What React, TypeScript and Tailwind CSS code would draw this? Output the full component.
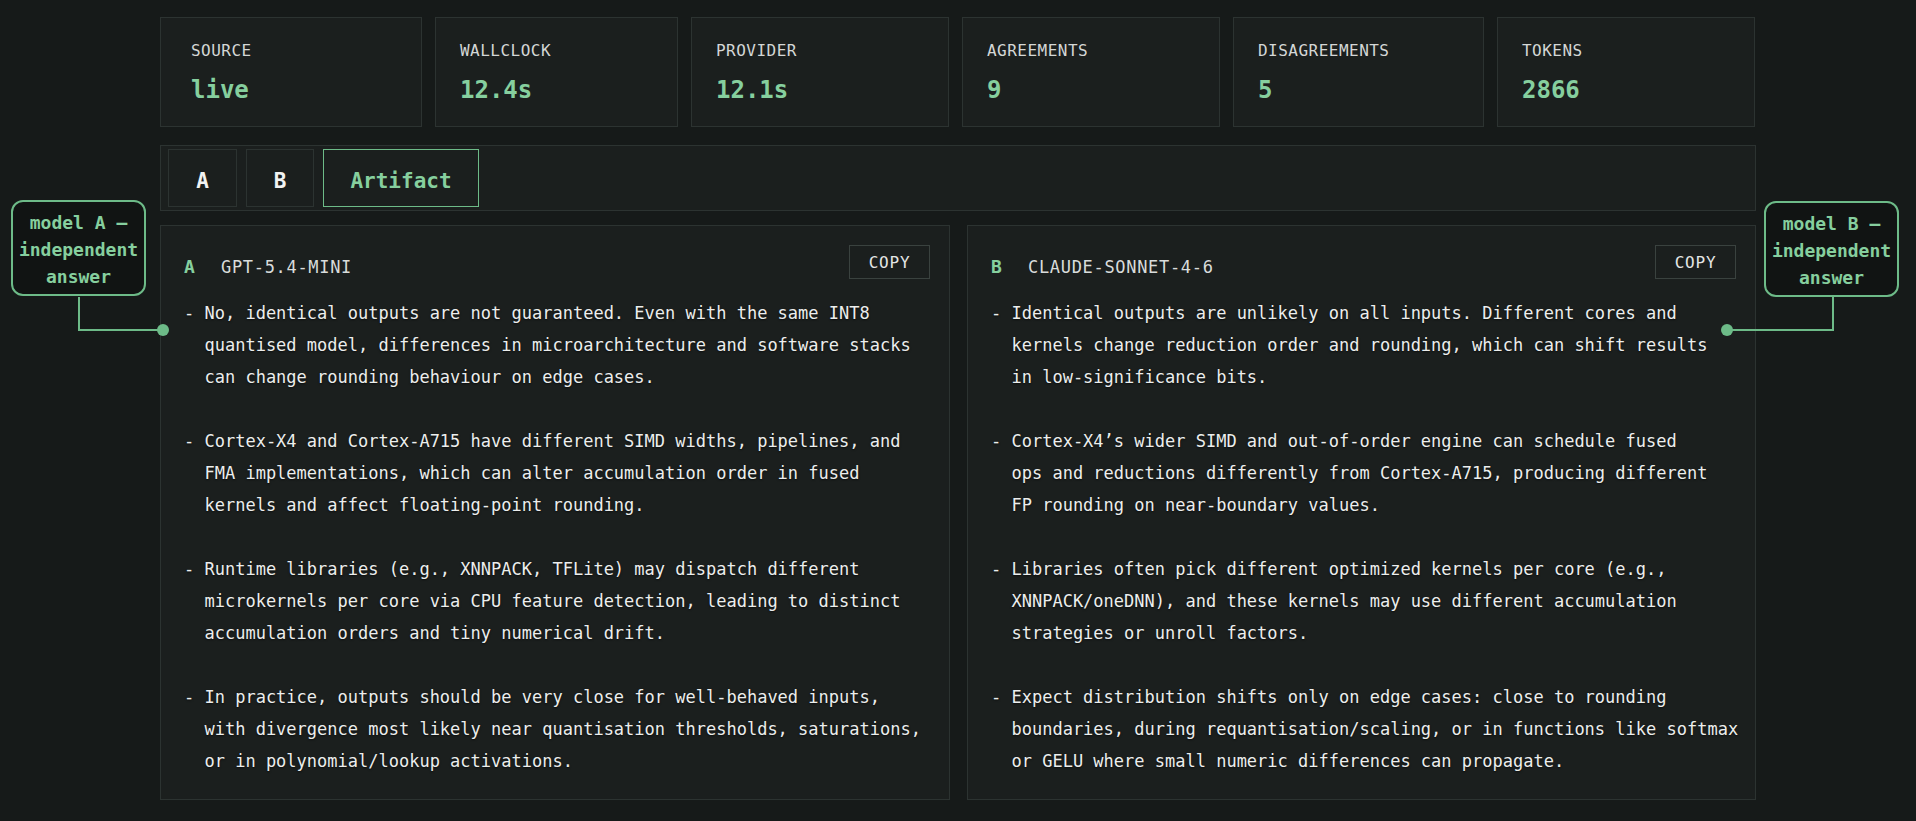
import React from "react";

const stats = [
  { label: "SOURCE", value: "live", cls: "w-[262px] pl-[30px]" },
  { label: "WALLCLOCK", value: "12.4s", cls: "w-[243px] pl-[24px]" },
  { label: "PROVIDER", value: "12.1s", cls: "w-[258px] pl-[24px]" },
  { label: "AGREEMENTS", value: "9", cls: "w-[258px] pl-[24px]" },
  { label: "DISAGREEMENTS", value: "5", cls: "w-[251px] pl-[24px]" },
  { label: "TOKENS", value: "2866", cls: "w-[258px] pl-[24px]" },
];

const leftLines = [
  "- No, identical outputs are not guaranteed. Even with the same INT8",
  "  quantised model, differences in microarchitecture and software stacks",
  "  can change rounding behaviour on edge cases.",
  "",
  "- Cortex-X4 and Cortex-A715 have different SIMD widths, pipelines, and",
  "  FMA implementations, which can alter accumulation order in fused",
  "  kernels and affect floating-point rounding.",
  "",
  "- Runtime libraries (e.g., XNNPACK, TFLite) may dispatch different",
  "  microkernels per core via CPU feature detection, leading to distinct",
  "  accumulation orders and tiny numerical drift.",
  "",
  "- In practice, outputs should be very close for well-behaved inputs,",
  "  with divergence most likely near quantisation thresholds, saturations,",
  "  or in polynomial/lookup activations.",
];

const rightLines = [
  "- Identical outputs are unlikely on all inputs. Different cores and",
  "  kernels change reduction order and rounding, which can shift results",
  "  in low-significance bits.",
  "",
  "- Cortex-X4\u2019s wider SIMD and out-of-order engine can schedule fused",
  "  ops and reductions differently from Cortex-A715, producing different",
  "  FP rounding on near-boundary values.",
  "",
  "- Libraries often pick different optimized kernels per core (e.g.,",
  "  XNNPACK/oneDNN), and these kernels may use different accumulation",
  "  strategies or unroll factors.",
  "",
  "- Expect distribution shifts only on edge cases: close to rounding",
  "  boundaries, during requantisation/scaling, or in functions like softmax",
  "  or GELU where small numeric differences can propagate.",
];

function Panel({ letter, model, lines }: { letter: string; model: string; lines: string[] }) {
  return (
    <div className="h-[575px] border border-[#2c3331] bg-[#1b1f1e] pt-[19px] pr-[19px] pl-[23px]">
      <div className="flex h-[34px] items-center justify-between">
        <div className="flex items-baseline pt-[10px]">
          <span className="w-[37px] text-[18px] font-bold text-[#86cf9e]">{letter}</span>
          <span className="text-[17px] tracking-[0.04em] text-[#d9dcdb]">{model}</span>
        </div>
        <div className="flex h-[34px] w-[81px] items-center justify-center border border-[#3a423f] pt-[2px] text-[16px] tracking-[0.05em] text-[#e4e6e5]">
          COPY
        </div>
      </div>
      <div className="mt-[18px] text-[17px] leading-[32px] text-[#eceeed] [text-shadow:0_1px_2px_rgba(0,0,0,0.6)]">
        {lines.map((l, i) => (
          <div key={i} className="h-[32px] whitespace-pre">
            {l}
          </div>
        ))}
      </div>
    </div>
  );
}

function Callout({ lines, cls }: { lines: string[]; cls: string }) {
  return (
    <div
      className={
        "absolute flex h-[96px] w-[135px] flex-col items-center justify-center rounded-[12px] border-2 border-[#6dbb88] bg-[#111413] pt-[2px] text-[18px] font-bold leading-[27px] text-[#86cf9e] " +
        cls
      }
    >
      {lines.map((l, i) => (
        <div key={i} className="whitespace-pre">
          {l}
        </div>
      ))}
    </div>
  );
}

export default function App() {
  return (
    <div className="relative h-[821px] w-full overflow-hidden bg-[#161a19] font-['DejaVu_Sans_Mono',monospace]">
      <div className="ml-[160px] w-[1596px] pt-[17px]">
        <div className="flex gap-[13px]">
          {stats.map((s) => (
            <div
              key={s.label}
              className={"h-[110px] border border-[#2c3331] bg-[#1b1f1e] pt-[23px] " + s.cls}
            >
              <div className="text-[16px] leading-[20px] tracking-[0.03em] text-[#d4d7d6]">{s.label}</div>
              <div className="mt-[15px] text-[24px] font-bold leading-[28px] text-[#86cf9e]">{s.value}</div>
            </div>
          ))}
        </div>

        <div className="mt-[18px] flex h-[66px] items-center gap-[9px] border border-[#2c3331] bg-[#1b1f1e] px-[7px]">
          <div className="flex h-[58px] w-[69px] items-center justify-center border border-[#2c3331] pt-[7px] text-[21px] font-bold text-[#f2f3f3]">
            A
          </div>
          <div className="flex h-[58px] w-[68px] items-center justify-center border border-[#2c3331] pt-[7px] text-[21px] font-bold text-[#f2f3f3]">
            B
          </div>
          <div className="flex h-[58px] w-[156px] items-center justify-center border border-[#6dbb88] pt-[7px] text-[21px] font-bold text-[#86cf9e]">
            Artifact
          </div>
        </div>

        <div className="mt-[14px] grid grid-cols-[790px_789px] gap-[17px]">
          <Panel letter="A" model="GPT-5.4-MINI" lines={leftLines} />
          <Panel letter="B" model="CLAUDE-SONNET-4-6" lines={rightLines} />
        </div>
      </div>

      <Callout lines={["model A \u2014", "independent", "answer"]} cls="left-[11px] top-[200px]" />
      <Callout lines={["model B \u2014", "independent", "answer"]} cls="left-[1764px] top-[201px]" />

      <svg className="pointer-events-none absolute left-0 top-0" width="1916" height="821">
        <path d="M79 297 V330 H163" fill="none" stroke="#6dbb88" strokeWidth="2" />
        <circle cx="163" cy="330" r="6" fill="#6dbb88" />
        <path d="M1833 297 V330 H1727" fill="none" stroke="#6dbb88" strokeWidth="2" />
        <circle cx="1727" cy="330" r="6" fill="#6dbb88" />
      </svg>
    </div>
  );
}
